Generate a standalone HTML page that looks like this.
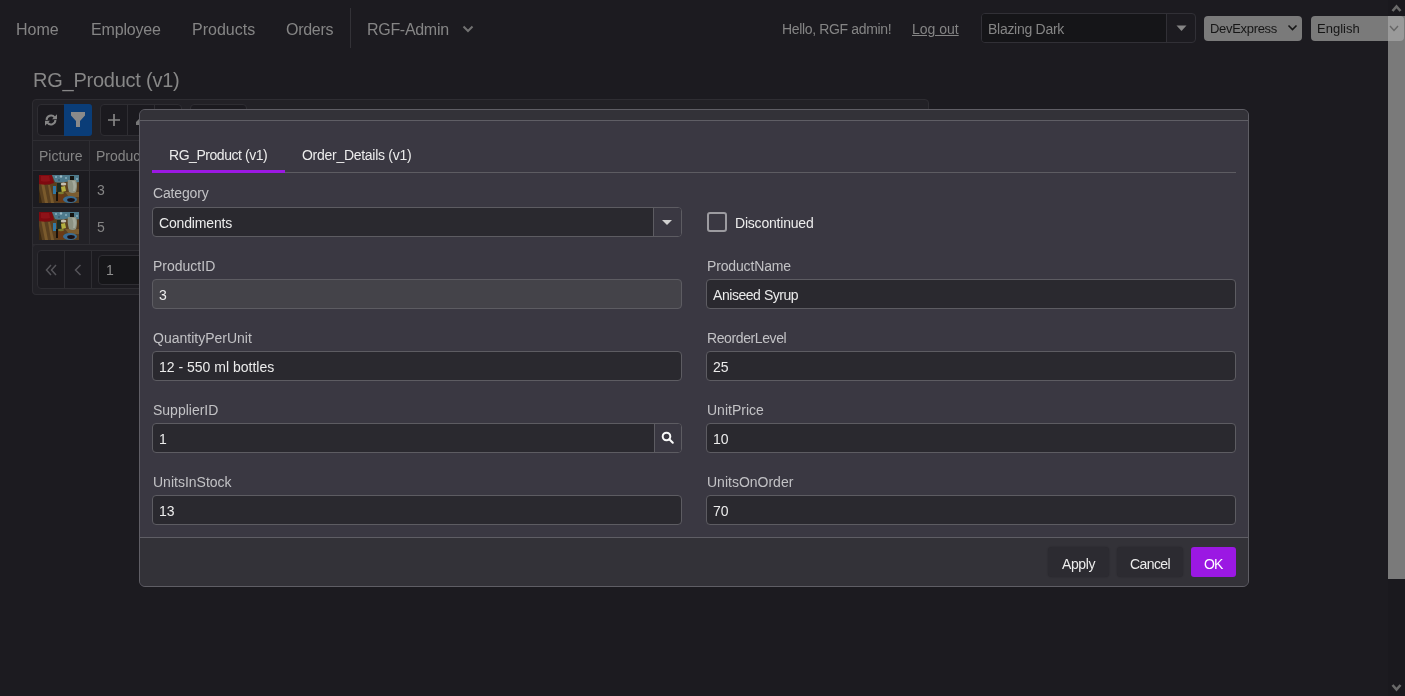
<!DOCTYPE html>
<html><head><meta charset="utf-8">
<style>
*{box-sizing:border-box;margin:0;padding:0}
html,body{width:1405px;height:696px;overflow:hidden;background:#1c1b20;font-family:"Liberation Sans",sans-serif;}
.a{position:absolute;white-space:nowrap;will-change:transform}
.t14{font-size:14px;line-height:20px}
.t16{font-size:16px;line-height:20px}
.nav{color:#858585}
.bg{position:absolute;border:1px solid #2e2d32;border-radius:4px;background:#1b1a1f}
.vl{position:absolute;width:1px;background:#2e2d32}
.hl{position:absolute;height:1px;background:#2e2d32}
.modal{position:absolute;left:139px;top:109px;width:1110px;height:478px;border:1px solid #5f5e65;border-radius:6px;background:#3a3842;overflow:hidden}
.mh{position:absolute;left:0;top:0;width:100%;height:11px;background:#333238;border-bottom:1px solid #5f5e65}
.mf{position:absolute;left:0;top:427px;width:100%;height:51px;background:#333238;border-top:1px solid #5f5e65}
.lbl{color:#c2c2c5}
.inp{position:absolute;height:30px;width:530px;background:#2a292f;border:1px solid #5d5c62;border-radius:4px}
.val{color:#ececec}
.btn{position:absolute;top:547px;height:30px;background:#2c2b31;border-radius:4px;color:#f0f0f0;box-shadow:0 0 2px rgba(0,0,0,.25)}
</style></head>
<body>
<!-- NAV -->
<div class="a t16 nav" style="left:16px;top:20px">Home</div>
<div class="a t16 nav" style="left:91px;top:20px;letter-spacing:-0.17px">Employee</div>
<div class="a t16 nav" style="left:192px;top:20px">Products</div>
<div class="a t16 nav" style="left:286px;top:20px;letter-spacing:-0.28px">Orders</div>
<div class="a" style="left:350px;top:8px;width:1px;height:40px;background:#333237"></div>
<div class="a t16 nav" style="left:367px;top:20px;letter-spacing:-0.3px">RGF-Admin</div>
<svg class="a" style="left:461px;top:24px" width="14" height="10" viewBox="0 0 14 10"><path d="M2.5 2.5 L7 7 L11.5 2.5" fill="none" stroke="#727272" stroke-width="2"/></svg>

<div class="a t14 nav" style="left:782px;top:19px;letter-spacing:-0.35px">Hello, RGF admin!</div>
<div class="a t14 nav" style="left:912px;top:19px;text-decoration:underline">Log out</div>
<!-- theme combo -->
<div class="a" style="left:981px;top:13px;width:215px;height:30px;border:1px solid #313036;border-radius:4px;background:#1c1b20;overflow:hidden">
  <div class="a" style="left:0;top:0;width:185px;height:28px;background:#151518;border-right:1px solid #313036"></div>
</div>
<div class="a t14 nav" style="left:988px;top:19px;letter-spacing:-0.28px">Blazing Dark</div>
<svg class="a" style="left:1176px;top:25px" width="11" height="7" viewBox="0 0 11 7"><path d="M0.5 0.5 H10.5 L5.5 6 Z" fill="#858585"/></svg>
<!-- selects -->
<div class="a" style="left:1204px;top:16px;width:98px;height:25px;background:#7a7a7a;border-radius:4px"></div>
<div class="a" style="left:1210px;top:19px;font-size:13px;line-height:20px;color:#161616;letter-spacing:-0.31px">DevExpress</div>
<svg class="a" style="left:1287px;top:24px" width="11" height="8" viewBox="0 0 11 8"><path d="M1.5 1.5 L5.5 5.5 L9.5 1.5" fill="none" stroke="#161616" stroke-width="1.6"/></svg>
<div class="a" style="left:1311px;top:16px;width:93px;height:25px;background:#7a7a7a;border-radius:4px"></div>
<div class="a" style="left:1317px;top:19px;font-size:13px;line-height:20px;color:#161616">English</div>

<!-- title -->
<div class="a" style="left:33px;top:68px;font-size:20px;line-height:24px;color:#878787;letter-spacing:-0.24px">RG_Product (v1)</div>

<!-- grid -->
<div class="a" style="left:32px;top:99px;width:897px;height:196px;background:#222126;border:1px solid #2e2d32;border-radius:4px"></div>
<div class="hl" style="left:33px;top:140px;width:895px"></div>
<div class="bg" style="left:37px;top:104px;width:55px;height:32px"></div>
<div class="a" style="left:64px;top:104px;width:28px;height:32px;background:#0a3d78;border-radius:0 3px 3px 0"></div>
<div class="bg" style="left:100px;top:104px;width:82px;height:32px"></div>
<div class="vl" style="left:127px;top:105px;height:30px"></div>
<div class="vl" style="left:154px;top:105px;height:30px"></div>
<div class="bg" style="left:190px;top:104px;width:57px;height:32px"></div>
<!-- refresh icon -->
<svg class="a" style="left:45px;top:114px" width="12" height="12" viewBox="0 0 12 12"><path d="M1.6 6 A4.4 4.4 0 0 1 9.6 3.4 M10.4 6 A4.4 4.4 0 0 1 2.4 8.6" fill="none" stroke="#858585" stroke-width="2"/><path d="M12 0.3 V5.3 H7 Z M0 11.7 V6.7 H5 Z" fill="#858585"/></svg>
<!-- filter icon -->
<svg class="a" style="left:71px;top:112px" width="14" height="15" viewBox="0 0 14 15"><path d="M0 0 H14 V3.5 L9 9 V15 H5 V9 L0 3.5 Z" fill="#8a8a8a"/></svg>
<!-- plus -->
<svg class="a" style="left:108px;top:114px" width="12" height="12" viewBox="0 0 12 12"><path d="M6 0 V12 M0 6 H12" stroke="#858585" stroke-width="1.7"/></svg>
<svg class="a" style="left:135px;top:119px" width="5" height="6" viewBox="0 0 5 6"><path d="M1 6 L1 3 L4 0 L5 0 L5 6 Z" fill="#777"/></svg>

<!-- header row -->
<div class="a t14 nav" style="left:39px;top:146px">Picture</div>
<div class="a t14 nav" style="left:96px;top:146px">Product</div>
<div class="hl" style="left:33px;top:170px;width:895px"></div>
<div class="vl" style="left:89px;top:141px;height:103px"></div>
<div class="a" style="left:33px;top:171px;width:895px;height:36px;background:#1c1b20"></div>
<div class="hl" style="left:33px;top:207px;width:895px"></div>
<div class="a" style="left:33px;top:208px;width:895px;height:36px;background:#222126"></div>
<div class="hl" style="left:33px;top:244px;width:895px"></div>
<div class="vl" style="left:89px;top:171px;height:73px"></div>
<svg class="a" style="left:39px;top:175px" width="40" height="28" viewBox="0 0 40 28">
 <rect width="40" height="28" fill="#5a4020"/>
 <path d="M2 8 L6 28 H9 L5 8 Z M9 10 L12 28 H15 L11 10 Z" fill="#7a5a2c"/>
 <path d="M26 17 L30 22 H40 V17 Z" fill="#7a5c30"/>
 <path d="M0 14 L3 28 H0 Z" fill="#3a2810"/>
 <path d="M0 0 H13 L15 8 Q8 11 0 9 Z" fill="#7e0a10"/>
 <path d="M2 1 H10 L11 6 Q6 7 2 6 Z" fill="#8e1218"/>
 <path d="M13 0 H40 V7 Q36 8 33 6 L26 7 Q20 8 16 7 Z" fill="#4e7a8c"/>
 <circle cx="17" cy="2" r="1" fill="#8ab0c0"/><circle cx="22" cy="1.5" r="1.2" fill="#9ab8c4"/><circle cx="27" cy="3" r="1" fill="#8aaebc"/><circle cx="38" cy="4" r="1" fill="#8aaebc"/><circle cx="20" cy="5" r="0.8" fill="#2a4a60"/>
 <path d="M29 5 Q28 10 30 17 Q34 19 37 17 Q39 10 37 5 Z" fill="#8c9282"/>
 <path d="M33 6 Q35 10 34 16 L36 16 Q38 10 36 6 Z" fill="#a4aa9c"/>
 <rect x="31" y="1" width="4" height="4" fill="#141410"/>
 <rect x="14" y="11" width="3" height="8" fill="#3278a4"/>
 <rect x="18" y="8" width="4" height="10" fill="#1c2a20"/>
 <ellipse cx="24.5" cy="9" rx="2.8" ry="1.6" fill="#c4c0b0"/>
 <path d="M22 12 L26 11 L27 16 L23 17 Z" fill="#b4b040"/>
 <rect x="19" y="17" width="6" height="10" fill="#6a3a16"/>
 <ellipse cx="22" cy="18" rx="3" ry="1.3" fill="#7a7a30"/>
 <rect x="17" y="17" width="2" height="9" fill="#1a120a"/>
 <ellipse cx="31" cy="24.5" rx="7" ry="3.5" fill="#3a6c92"/>
 <ellipse cx="32" cy="25" rx="3.8" ry="1.9" fill="#1a0f12"/>
</svg>


<svg class="a" style="left:39px;top:212px" width="40" height="28" viewBox="0 0 40 28">
 <rect width="40" height="28" fill="#5a4020"/>
 <path d="M2 8 L6 28 H9 L5 8 Z M9 10 L12 28 H15 L11 10 Z" fill="#7a5a2c"/>
 <path d="M26 17 L30 22 H40 V17 Z" fill="#7a5c30"/>
 <path d="M0 14 L3 28 H0 Z" fill="#3a2810"/>
 <path d="M0 0 H13 L15 8 Q8 11 0 9 Z" fill="#7e0a10"/>
 <path d="M2 1 H10 L11 6 Q6 7 2 6 Z" fill="#8e1218"/>
 <path d="M13 0 H40 V7 Q36 8 33 6 L26 7 Q20 8 16 7 Z" fill="#4e7a8c"/>
 <circle cx="17" cy="2" r="1" fill="#8ab0c0"/><circle cx="22" cy="1.5" r="1.2" fill="#9ab8c4"/><circle cx="27" cy="3" r="1" fill="#8aaebc"/><circle cx="38" cy="4" r="1" fill="#8aaebc"/><circle cx="20" cy="5" r="0.8" fill="#2a4a60"/>
 <path d="M29 5 Q28 10 30 17 Q34 19 37 17 Q39 10 37 5 Z" fill="#8c9282"/>
 <path d="M33 6 Q35 10 34 16 L36 16 Q38 10 36 6 Z" fill="#a4aa9c"/>
 <rect x="31" y="1" width="4" height="4" fill="#141410"/>
 <rect x="14" y="11" width="3" height="8" fill="#3278a4"/>
 <rect x="18" y="8" width="4" height="10" fill="#1c2a20"/>
 <ellipse cx="24.5" cy="9" rx="2.8" ry="1.6" fill="#c4c0b0"/>
 <path d="M22 12 L26 11 L27 16 L23 17 Z" fill="#b4b040"/>
 <rect x="19" y="17" width="6" height="10" fill="#6a3a16"/>
 <ellipse cx="22" cy="18" rx="3" ry="1.3" fill="#7a7a30"/>
 <rect x="17" y="17" width="2" height="9" fill="#1a120a"/>
 <ellipse cx="31" cy="24.5" rx="7" ry="3.5" fill="#3a6c92"/>
 <ellipse cx="32" cy="25" rx="3.8" ry="1.9" fill="#1a0f12"/>
</svg>


<div class="a t14 nav" style="left:97px;top:180px">3</div>
<div class="a t14 nav" style="left:97px;top:217px">5</div>
<!-- pager -->
<div class="a" style="left:32px;top:244px;width:897px;height:51px;border:1px solid #2e2d32;border-radius:4px;background:#222126"></div>
<div class="bg" style="left:37px;top:250px;width:110px;height:39px;background:#1c1b20"></div>
<div class="vl" style="left:64px;top:251px;height:37px"></div>
<div class="vl" style="left:91px;top:251px;height:37px"></div>
<div class="bg" style="left:98px;top:255px;width:50px;height:30px;background:#161619"></div>
<div class="a t14" style="left:106px;top:260px;color:#8f8f8f">1</div>
<svg class="a" style="left:45px;top:264px" width="12" height="12" viewBox="0 0 12 12"><path d="M6 1 L1.5 6 L6 11 M11 1 L6.5 6 L11 11" fill="none" stroke="#555459" stroke-width="1.5"/></svg>
<svg class="a" style="left:74px;top:264px" width="8" height="12" viewBox="0 0 8 12"><path d="M6.5 1 L1.5 6 L6.5 11" fill="none" stroke="#555459" stroke-width="1.5"/></svg>

<!-- MODAL -->
<div class="modal">
  <div class="mh"></div>
  <div class="mf"></div>
</div>
<!-- tabs -->
<div class="a" style="left:152px;top:172px;width:1084px;height:1px;background:#5d5c62"></div>
<div class="a" style="left:152px;top:170px;width:133px;height:3px;background:#9b18e3"></div>
<div class="a t14 val" style="left:169px;top:145px;letter-spacing:-0.45px">RG_Product (v1)</div>
<div class="a t14 val" style="left:302px;top:145px;letter-spacing:-0.28px">Order_Details (v1)</div>

<!-- row1 -->
<div class="a t14 lbl" style="left:153px;top:183px;letter-spacing:-0.15px">Category</div>
<div class="inp" style="left:152px;top:207px"></div>
<div class="a" style="left:653px;top:208px;width:28px;height:28px;background:#3a3842;border-left:1px solid #5d5c62;border-radius:0 3px 3px 0"></div>
<svg class="a" style="left:662px;top:220px" width="10" height="5" viewBox="0 0 10 5"><path d="M0 0 H10 L5 5 Z" fill="#d0d0d0"/></svg>
<div class="a t14 val" style="left:159px;top:213px;letter-spacing:-0.15px">Condiments</div>
<div class="a" style="left:707px;top:212px;width:20px;height:20px;border:2px solid #9c9ba0;border-radius:3px"></div>
<div class="a t14 val" style="left:735px;top:213px;letter-spacing:-0.2px">Discontinued</div>

<!-- row2 -->
<div class="a t14 lbl" style="left:153px;top:256px">ProductID</div>
<div class="inp" style="left:152px;top:279px;background:#444349"></div>
<div class="a t14 val" style="left:159px;top:285px">3</div>
<div class="a t14 lbl" style="left:707px;top:256px;letter-spacing:-0.15px">ProductName</div>
<div class="inp" style="left:706px;top:279px"></div>
<div class="a t14 val" style="left:713px;top:285px;letter-spacing:-0.45px">Aniseed Syrup</div>

<!-- row3 -->
<div class="a t14 lbl" style="left:153px;top:328px">QuantityPerUnit</div>
<div class="inp" style="left:152px;top:351px"></div>
<div class="a t14 val" style="left:159px;top:357px">12 - 550 ml bottles</div>
<div class="a t14 lbl" style="left:707px;top:328px;letter-spacing:-0.4px">ReorderLevel</div>
<div class="inp" style="left:706px;top:351px"></div>
<div class="a t14 val" style="left:713px;top:357px">25</div>

<!-- row4 -->
<div class="a t14 lbl" style="left:153px;top:400px">SupplierID</div>
<div class="inp" style="left:152px;top:423px"></div>
<div class="a" style="left:654px;top:424px;width:27px;height:28px;background:#3a3842;border-left:1px solid #5d5c62;border-radius:0 3px 3px 0"></div>
<svg class="a" style="left:661px;top:431px" width="14" height="14" viewBox="0 0 14 14"><circle cx="5.5" cy="5.5" r="3.8" fill="none" stroke="#fafafa" stroke-width="2"/><path d="M8.3 8.3 L11.8 11.8" stroke="#fafafa" stroke-width="2" stroke-linecap="round"/></svg>
<div class="a t14 val" style="left:159px;top:429px">1</div>
<div class="a t14 lbl" style="left:707px;top:400px">UnitPrice</div>
<div class="inp" style="left:706px;top:423px"></div>
<div class="a t14 val" style="left:713px;top:429px">10</div>

<!-- row5 -->
<div class="a t14 lbl" style="left:153px;top:472px">UnitsInStock</div>
<div class="inp" style="left:152px;top:495px"></div>
<div class="a t14 val" style="left:159px;top:501px">13</div>
<div class="a t14 lbl" style="left:707px;top:472px">UnitsOnOrder</div>
<div class="inp" style="left:706px;top:495px"></div>
<div class="a t14 val" style="left:713px;top:501px">70</div>

<!-- footer buttons -->
<div class="btn" style="left:1048px;width:61px"></div>
<div class="btn" style="left:1117px;width:66px"></div>
<div class="btn" style="left:1191px;width:45px;background:#9b18e3;box-shadow:none;border-radius:3px"></div>
<div class="a t14 val" style="left:1062px;top:554px;letter-spacing:-0.4px">Apply</div>
<div class="a t14 val" style="left:1130px;top:554px;letter-spacing:-0.6px">Cancel</div>
<div class="a t14" style="left:1204px;top:554px;color:#fff;letter-spacing:-1px">OK</div>

<!-- scrollbar -->
<div class="a" style="left:1388px;top:0;width:17px;height:696px;background:#1a191e"></div>
<div class="a" style="left:1388px;top:16px;width:17px;height:563px;background:#7a7a7a"></div>
<div class="a" style="left:1388px;top:16px;width:16px;height:25px;background:#9a9a9a;border-radius:0 4px 4px 0"></div>
<svg class="a" style="left:1391px;top:4px" width="11" height="8" viewBox="0 0 11 8"><path d="M1.5 7 L5.5 2.5 L9.5 7" fill="none" stroke="#6a6a6a" stroke-width="2.6"/></svg>
<svg class="a" style="left:1391px;top:684px" width="11" height="8" viewBox="0 0 11 8"><path d="M1.5 1 L5.5 5.5 L9.5 1" fill="none" stroke="#6a6a6a" stroke-width="2.6"/></svg>
<svg class="a" style="left:1389px;top:25px" width="10" height="7" viewBox="0 0 10 7"><path d="M1 1 L5 5.5 L9 1" fill="none" stroke="#666" stroke-width="1.4"/></svg>
</body></html>
